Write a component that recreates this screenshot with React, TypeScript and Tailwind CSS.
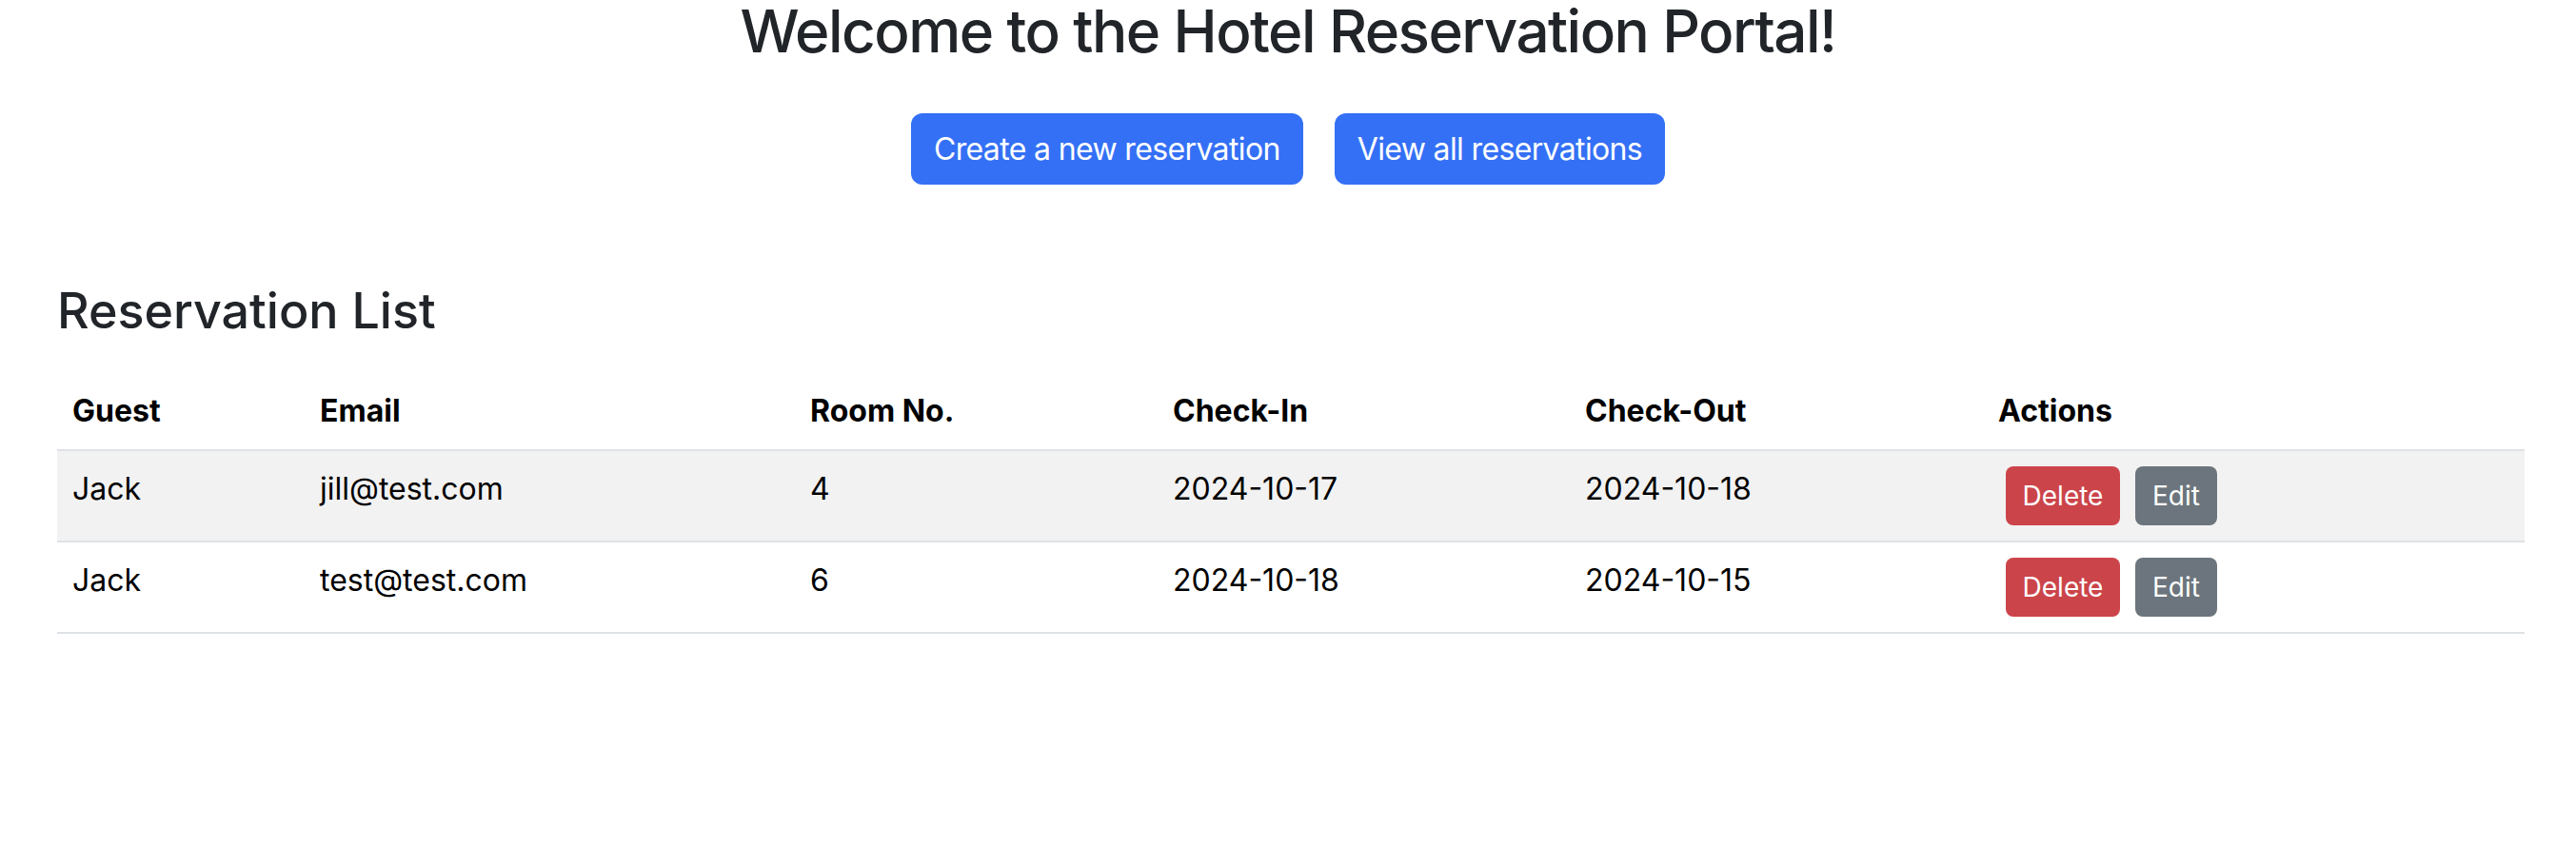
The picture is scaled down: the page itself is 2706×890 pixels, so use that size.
import React from "react";

const reservations = [
  { guest: "Jack", email: "jill@test.com", room: "4", checkIn: "2024-10-17", checkOut: "2024-10-18" },
  { guest: "Jack", email: "test@test.com", room: "6", checkIn: "2024-10-18", checkOut: "2024-10-15" },
];

export default function App() {
  return (
    <div className="min-h-screen bg-white font-['Inter','Noto_Sans',sans-serif] text-[#212529]">
      <h1 className="text-center text-[62px] leading-[66px] font-medium tracking-[-0.025em]">
        Welcome to the Hotel Reservation Portal!
      </h1>

      <div className="mt-[53px] flex justify-center gap-[33px]">
        <button className="h-[75px] px-[24px] rounded-[12px] bg-[#3470f5] text-white text-[32px] tracking-[-0.02em]">
          Create a new reservation
        </button>
        <button className="h-[75px] px-[24px] rounded-[12px] bg-[#3470f5] text-white text-[32px] tracking-[-0.02em]">
          View all reservations
        </button>
      </div>

      <div className="pl-[60px] pr-[54px]">
        <h2 className="mt-[102px] text-[52px] leading-[62px] font-medium">Reservation List</h2>

        <table className="mt-[34px] w-full table-fixed border-collapse text-[32px] leading-[48px] text-black">
          <thead>
            <tr className="border-b-2 border-[#dee2e6]">
              <th className="w-[260px] p-[16px] text-left font-bold">Guest</th>
              <th className="w-[515px] p-[16px] text-left font-bold">Email</th>
              <th className="w-[381px] p-[16px] text-left font-bold">Room No.</th>
              <th className="w-[433px] p-[16px] text-left font-bold">Check-In</th>
              <th className="w-[434px] p-[16px] text-left font-bold">Check-Out</th>
              <th className="p-[16px] text-left font-bold">Actions</th>
            </tr>
          </thead>
          <tbody>
            {reservations.map((r, i) => (
              <tr key={i} className={`border-b-2 border-[#dee2e6] ${i % 2 === 0 ? "bg-[#f2f2f2]" : "bg-white"}`}>
                <td className="p-[16px] align-top">{r.guest}</td>
                <td className="p-[16px] align-top">{r.email}</td>
                <td className="p-[16px] align-top">{r.room}</td>
                <td className="p-[16px] align-top">{r.checkIn}</td>
                <td className="p-[16px] align-top">{r.checkOut}</td>
                <td className="p-[16px] align-top">
                  <div className="flex gap-[16px] pl-[8px]">
                    <button className="h-[62px] w-[120px] rounded-[8px] bg-[#cb444a] text-white text-[28px]">
                      Delete
                    </button>
                    <button className="h-[62px] w-[86px] rounded-[8px] bg-[#6c757d] text-white text-[28px]">
                      Edit
                    </button>
                  </div>
                </td>
              </tr>
            ))}
          </tbody>
        </table>
      </div>
    </div>
  );
}
